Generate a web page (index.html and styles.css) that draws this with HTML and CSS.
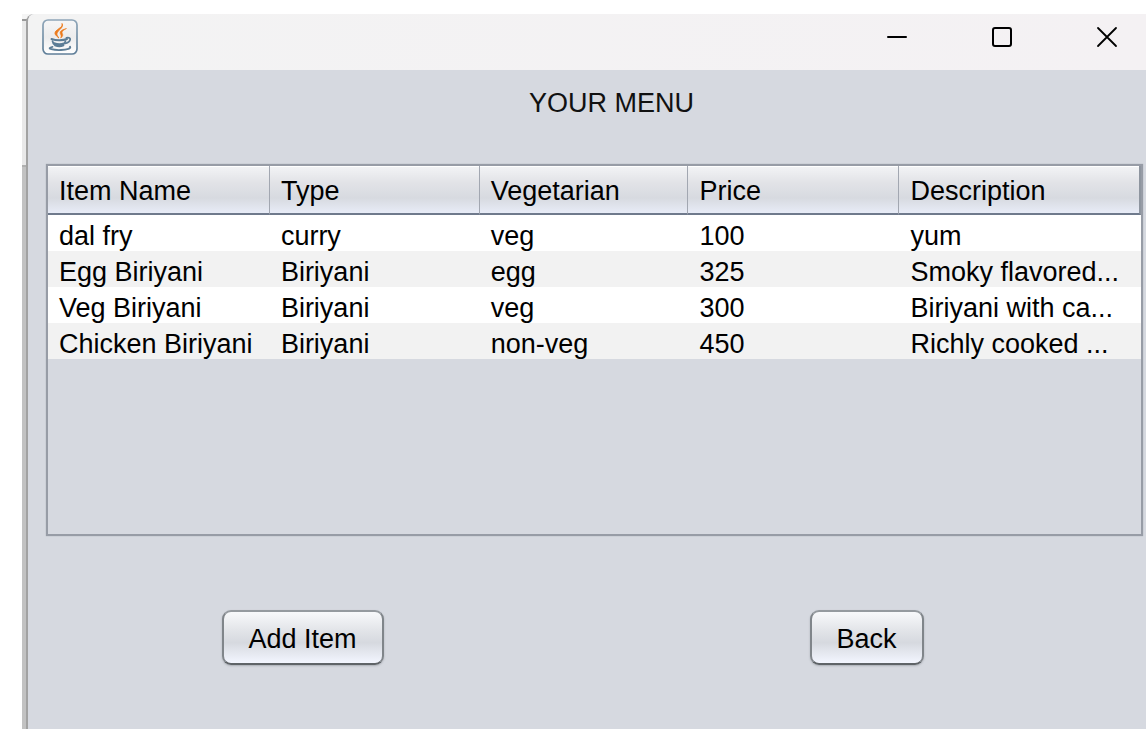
FILE: index.html
```html
<!DOCTYPE html>
<html lang="en">
<head>
<meta charset="utf-8">
<title>Your Menu</title>
<link rel="stylesheet" href="styles.css">
</head>
<body>
<div class="desktop">
  <div class="backdrop"><div class="backdrop-top"></div></div>
  <div class="window">
    <header class="titlebar">
      <svg class="app-icon" viewBox="0 0 36 36" aria-hidden="true">
        <defs><linearGradient id="tile" x1="0" y1="0" x2="0" y2="1"><stop offset="0" stop-color="#f6f6f7"/><stop offset=".5" stop-color="#ececed"/><stop offset="1" stop-color="#ffffff"/></linearGradient>
        <linearGradient id="rim" x1="0" y1="0" x2="0" y2="1"><stop offset="0" stop-color="#8ea5b8"/><stop offset="1" stop-color="#5f7e98"/></linearGradient></defs>
        <rect x="1" y="1" width="34" height="34" rx="5" fill="url(#tile)" stroke="url(#rim)" stroke-width="1.700"/>
        <path d="M20 4.500c2.200 4-7.500 6-7 10 .3 1.800 2.300 3 3.800 4.500-1.200-2-2.300-3.200-1.800-5C16 11 22 9 20 4.500z" fill="#ec7a1c" stroke="#ec7a1c" stroke-width=".9"/>
        <path d="M24.500 9.500c-4 1-6.800 2.500-6.300 4.700.4 1.600 1.600 2.400.5 4.800 2.200-1.500 2.500-3 1.500-4.800-.8-1.600 1-3 4.300-4.700z" fill="#ec7a1c" stroke="#ec7a1c" stroke-width=".6"/>
        <g fill="none" stroke="#5c7d96" stroke-linecap="round">
          <path d="M9.500 20c4.500 1.700 12 1.600 15.500 0" stroke-width="2"/>
          <path d="M24.500 18.800c5.500-1.300 4.500 4.400-1 5.500" stroke-width="1.800"/>
          <path d="M10.500 22c1 6 11.500 6 13 0M12 24c3 1.200 8 1.200 10.500 0M13 26.500c2.500 1 6.500.9 8.500 0" stroke-width="1.700"/>
          <path d="M10.500 27.800c-8 1.800 2 3.500 8.500 3.200 6-.2 10.500-1.500 9-3.400" stroke-width="1.800"/>
        </g>
      </svg>
      <div class="controls">
        <button class="control" aria-label="Minimize"><svg viewBox="0 0 22 22"><path d="M2 11h18" stroke-width="2"/></svg></button>
        <button class="control" aria-label="Maximize"><svg viewBox="0 0 22 22"><rect x="2" y="2" width="18" height="18" rx="2" stroke-width="2"/></svg></button>
        <button class="control" aria-label="Close"><svg viewBox="0 0 22 22"><path d="M2 2l18 18m0-18l-18 18" stroke-width="1.800"/></svg></button>
      </div>
    </header>
    <main class="content">
      <h1 class="heading">YOUR MENU</h1>
      <div class="table-pane">
        <table class="menu">
          <colgroup><col class="col-name"><col class="col-type"><col class="col-veg"><col class="col-price"><col class="col-desc"></colgroup>
          <thead><tr><th>Item Name</th><th>Type</th><th>Vegetarian</th><th>Price</th><th>Description</th></tr></thead>
          <tbody>
            <tr><td>dal fry</td><td>curry</td><td>veg</td><td>100</td><td>yum</td></tr>
            <tr><td>Egg Biriyani</td><td>Biriyani</td><td>egg</td><td>325</td><td>Smoky flavored...</td></tr>
            <tr><td>Veg Biriyani</td><td>Biriyani</td><td>veg</td><td>300</td><td>Biriyani with ca...</td></tr>
            <tr><td>Chicken Biriyani</td><td>Biriyani</td><td>non-veg</td><td>450</td><td>Richly cooked ...</td></tr>
          </tbody>
        </table>
      </div>
      <div class="actions">
        <button class="action">Add Item</button>
        <button class="action">Back</button>
      </div>
    </main>
  </div>
</div>
</body>
</html>
```
FILE: styles.css
```css
* { box-sizing: border-box; }

body {
  margin: 0;
  background: #fff;
  color: #000;
  font: 27px/36px "Liberation Sans", Arial, sans-serif;
}

.desktop {
  display: flex;
  min-height: 100vh;
  padding: 14px 0 4px 22px;
}

/* Sliver of the window behind this one */
.backdrop {
  flex: 0 0 12px;
  margin-right: -8px;
  background: #c2c2c2;
}

.backdrop-top {
  height: 153px;
  background: #e9e9e9;
  border-top: 5px solid #f5f5f5;
  border-bottom: 2px solid #b0b0b0;
  box-shadow: inset 0 2px #999;
}

.window {
  flex: 1;
  min-width: 0;
  display: flex;
  flex-direction: column;
  background: #d6d9e0;
  border-left: 2px solid #a2a2a2;
  border-top-left-radius: 8px;
  overflow: hidden;
}

.titlebar {
  display: flex;
  justify-content: space-between;
  height: 56px;
  padding: 5px 28px 0 14px;
  background: linear-gradient(90deg, #f3f3f3, #f4f1f3);
}

.app-icon { width: 36px; height: 36px; }

.controls { display: flex; gap: 83px; padding-top: 7px; }

.control {
  width: 22px;
  height: 22px;
  padding: 0;
  border: 0;
  background: none;
}

.control svg {
  display: block;
  fill: none;
  stroke: #000;
  stroke-linecap: round;
}

.content { flex: 1; padding: 15px 3px 0 18px; }

.heading {
  margin: 0 0 43px;
  padding-left: 34px;
  font-size: 27px;
  line-height: 36px;
  font-weight: 400;
  text-align: center;
  color: #111;
}

.table-pane {
  min-height: 372px;
  border: 2px solid #979ca6;
  box-shadow: 0 0 1px #9da3ae;
}

.menu {
  width: 100%;
  table-layout: fixed;
  border-collapse: separate;
  border-spacing: 0;
}

.col-name { width: 20.3%; }
.col-type { width: 19.2%; }
.col-veg { width: 19.1%; }
.col-price { width: 19.3%; }
.col-desc { width: 22.1%; }

.menu th {
  height: 49px;
  padding: 2px 0 0 11px;
  font-weight: 400;
  text-align: left;
  background: linear-gradient(#f3f4f6, #e2e3e7 35%, #d7dae0 68%, #e8ecf7);
  border-right: 1px solid #a2a7b1;
  border-bottom: 2px solid #6f7a8c;
  box-shadow: inset 0 1px #fff;
}

.menu th:last-child { border-right: 2px solid #8e959f; }

.menu td {
  height: 36px;
  padding: 6px 0 0 11px;
  line-height: 30px;
  white-space: nowrap;
  background: #fff;
}

.menu tr:nth-child(even) td { background: #f2f2f2; }

.actions {
  display: flex;
  justify-content: space-between;
  padding: 74px 20% 0 16%;
}

.action {
  height: 55px;
  padding: 2px 25px 0;
  border: 2px solid;
  border-color: #959a9f #80858a #5f6468;
  border-radius: 9px;
  background: linear-gradient(#f8f9fb, #e3e5e9 35%, #d6d9df 60%, #f3f6ff);
  box-shadow: 0 1px 2px #aaaeb5;
  font: inherit;
  color: #000;
}
```
